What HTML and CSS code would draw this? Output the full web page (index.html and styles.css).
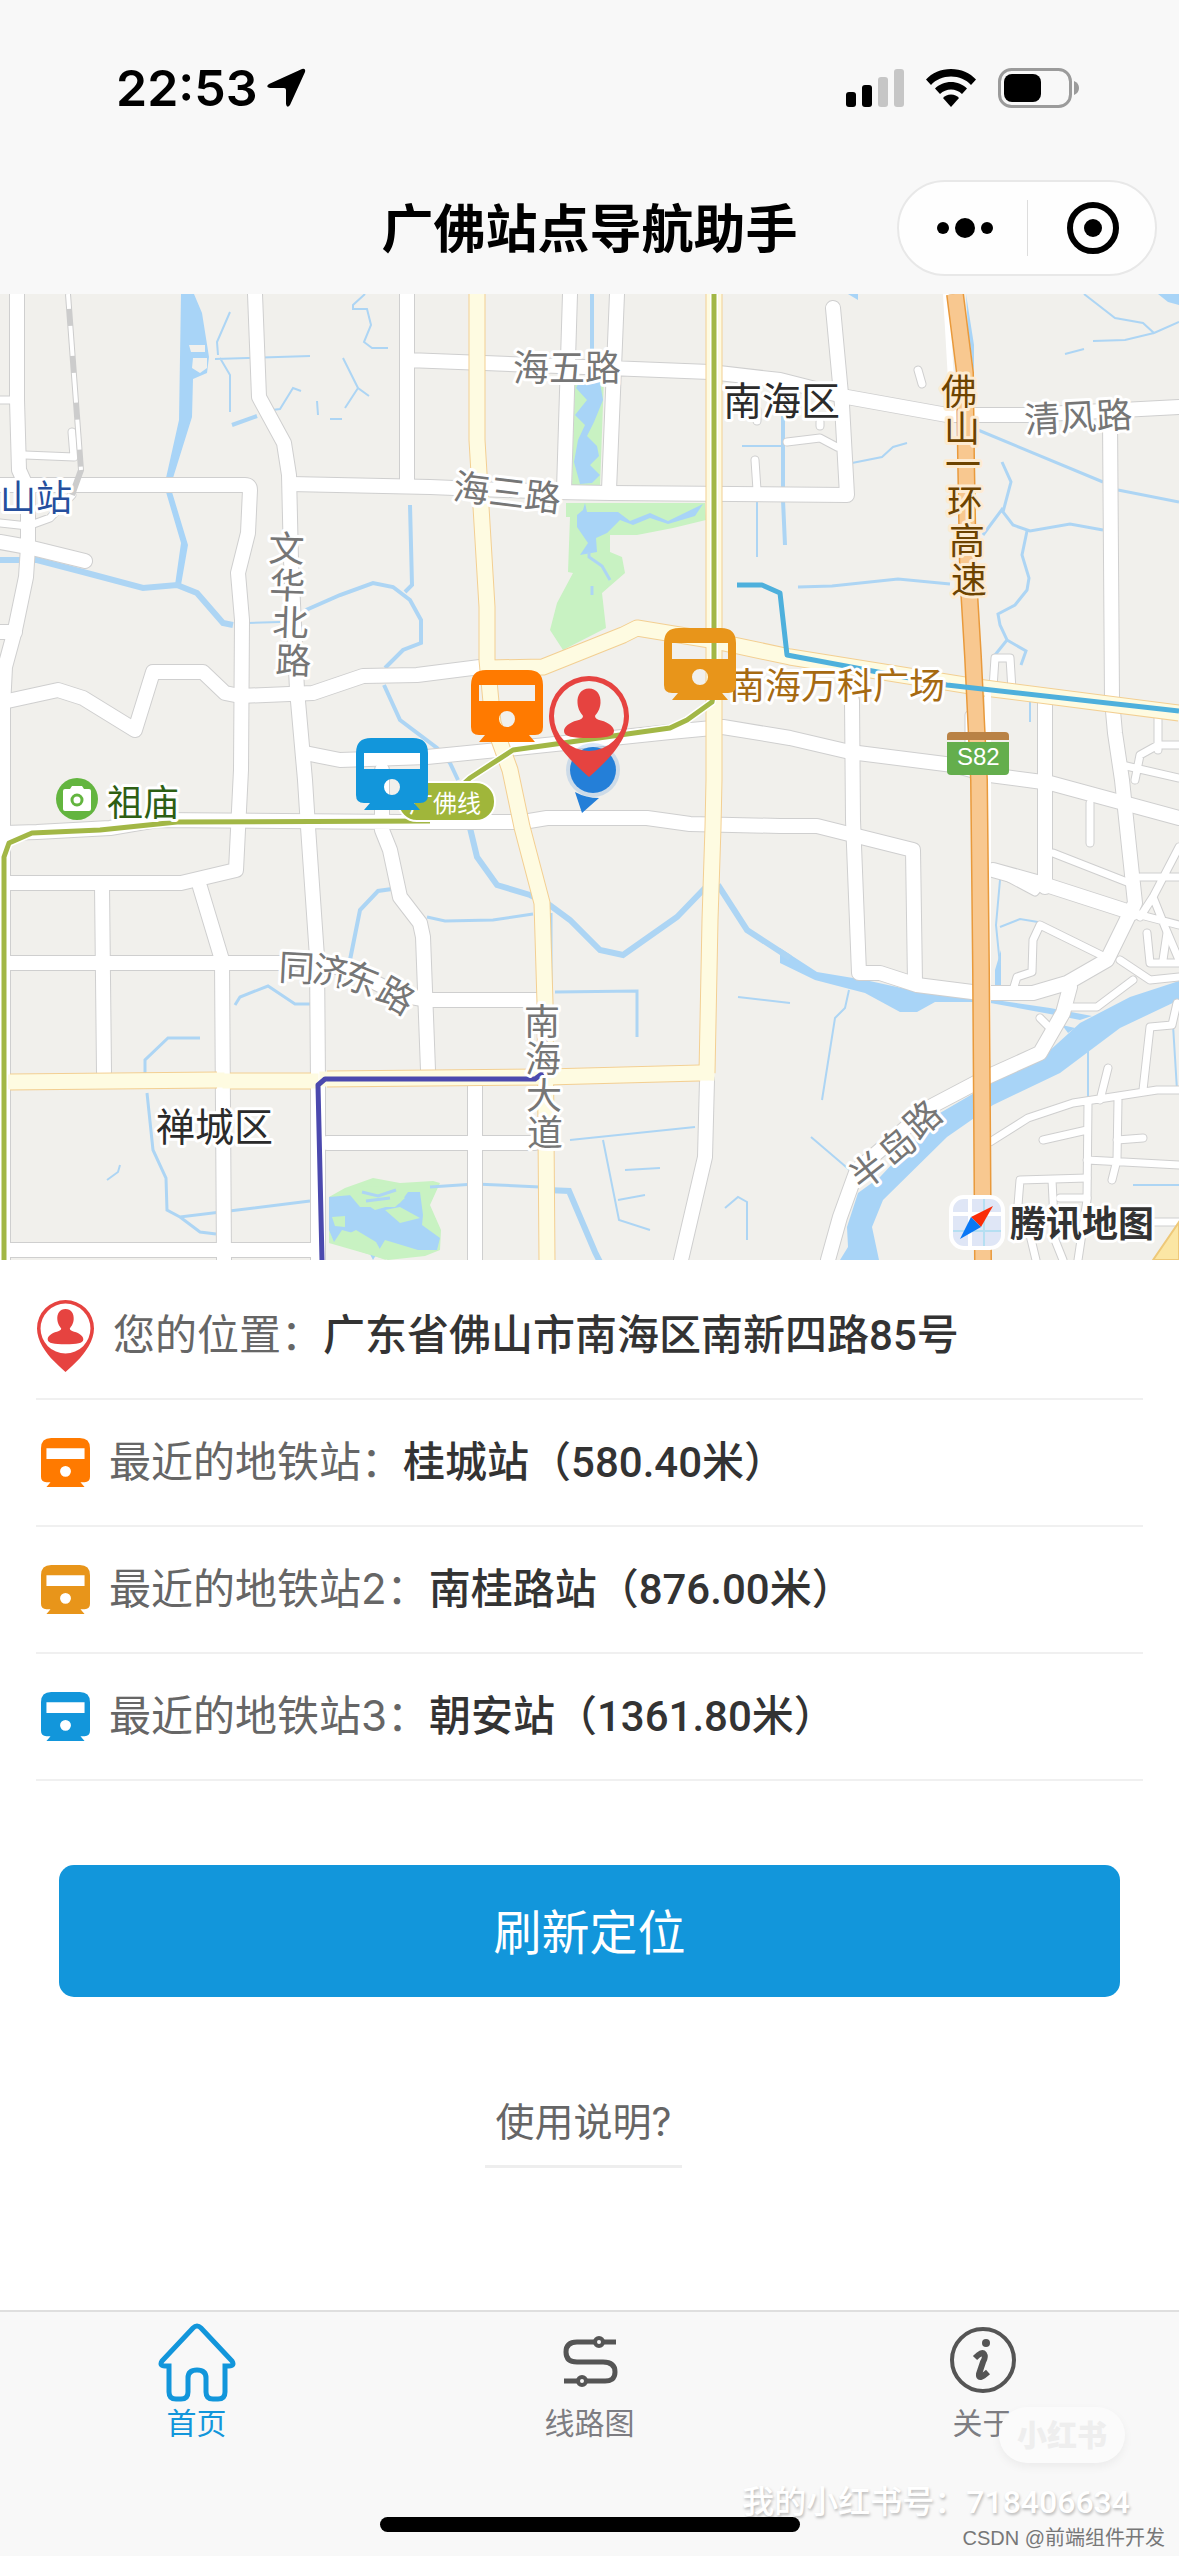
FILE: index.html
```html
<!DOCTYPE html>
<html lang="zh-CN">
<head>
<meta charset="utf-8">
<meta name="viewport" content="width=device-width, initial-scale=1">
<title>广佛站点导航助手</title>
<link rel="stylesheet" href="styles.css">
</head>
<body>
<svg class="sprite" aria-hidden="true">
  <symbol id="train" viewBox="0 0 72 72">
    <path fill="currentColor" fill-rule="evenodd" d="M15 0H57Q72 0 72 15V57Q72 65 64 65H58L64 72H8L14 65H8Q0 65 0 57V15Q0 0 15 0ZM8 15V31H64V15ZM36 41A8 8 0 1 0 36 57A8 8 0 1 0 36 41Z"/>
  </symbol>
  <symbol id="pin" viewBox="0 0 80 101">
    <path fill="currentColor" fill-rule="evenodd" d="M40 0A40 40 0 0 1 80 40C80 57 68 74 56 86Q46 96 40 101Q34 96 24 86C12 74 0 57 0 40A40 40 0 0 1 40 0ZM40 5A35 35 0 1 0 40 75A35 35 0 1 0 40 5Z"/>
    <path fill="currentColor" d="M40 12.500C48 12.500 52 19 51.500 27C51 34 48 37 46 40Q46 43 52 44.500C60 46.500 65 51 65 55C65 61 56 62 40 62C24 62 15 61 15 55C15 51 20 46.500 28 44.500Q34 43 34 40C32 37 29 34 28.500 27C28 19 32 12.500 40 12.500Z"/>
  </symbol>
</svg>

<header class="top">
  <div class="status">
    <div class="status-left">
      <span class="clock">22:53</span>
      <svg class="locate" viewBox="0 0 40 40"><path d="M36 1Q40 0 39 4L24 37Q21 41 20 36V22Q20 20 18 20H4Q-1 19 3 16Z"/></svg>
    </div>
    <div class="status-right">
      <svg class="signal" viewBox="0 0 58 38"><rect x="0" y="23" width="10" height="15" rx="3"/><rect x="16" y="16" width="10" height="22" rx="3"/><g fill="#c6c6c6"><rect x="32" y="8" width="10" height="30" rx="3"/><rect x="48" y="0" width="10" height="38" rx="3"/></g></svg>
      <svg class="wifi" viewBox="0 0 50 38"><path d="M25 0C35 0 44 4 50 10.500L45 16C40 10.500 33 7.500 25 7.500S10 10.500 5 16L0 10.500C6 4 15 0 25 0Z"/><path d="M25 13C31 13 37 15.500 41 19.500L36 25C33 22 29 20.500 25 20.500S17 22 14 25L9 19.500C13 15.500 19 13 25 13Z"/><path d="M25 25.500C28.500 25.500 31 27 33 29L25 38L17 29C19 27 21.500 25.500 25 25.500Z"/></svg>
      <svg class="battery" viewBox="0 0 82 40"><rect x="1.500" y="1.500" width="71" height="37" rx="12" fill="none" stroke="#9b9b9b" stroke-width="3"/><rect x="6" y="6" width="37" height="28" rx="8"/><path d="M76 13Q81 15 81 20T76 27Z" fill="#9b9b9b"/></svg>
    </div>
  </div>
  <div class="nav">
    <h1>广佛站点导航助手</h1>
    <div class="capsule">
      <button type="button" aria-label="更多"><svg viewBox="0 0 60 60"><circle cx="10" cy="30" r="6"/><circle cx="32" cy="30" r="10"/><circle cx="54" cy="30" r="6"/></svg></button>
      <button type="button" aria-label="关闭"><svg viewBox="0 0 60 60"><circle cx="32" cy="30" r="23" fill="none" stroke="#000" stroke-width="6"/><circle cx="32" cy="30" r="9"/></svg></button>
    </div>
  </div>
</header>

<main>
<svg class="map" viewBox="0 294 1179 966" role="img" aria-label="地图">
  <defs>
    <g id="streets">
      <path d="M17 294V400L19 470L28 490V547L26 577L15 630L5 667L3 707V1260"/>
      <path d="M0 485H245Q250 485 250 490L248 533L238 573L242 620L241 770L236 870L181 883H0"/>
      <path d="M255 294L259 397L284 443L289 475L291 560L297 690L305 780L308 827L317 957L318 1083V1260"/>
      <path d="M290 484L430 487L557 492L610 493L847 495L842 405L833 308"/>
      <path d="M0 542L28 547L85 561"/>
      <path d="M0 632H15M3 702L58 690L83 698L135 730L153 672H203L225 693L240 696L313 693L363 676L417 675L480 667"/>
      <path d="M305 753L340 760L427 757L517 748L670 732L723 727L790 738L850 752L953 765L990 775L1050 783L1179 818"/>
      <path d="M407 294V483M407 360L710 372L780 380L847 397L947 415H1027L1179 407M570 294L564 490M617 294L609 490"/>
      <path d="M1110 418L1112 700L1115 733L1122 780L1128 837L1135 903L1107 960L1067 983L1033 993H980L917 985L880 973H859L853 820L852 700"/>
      <path d="M1045 703V887M5 833L37 832L110 828L157 820L400 822H523L547 818H647L690 824L780 826H817L913 850L915 983M382 770V830L390 850L400 897L420 923L423 937L428 1070"/>
      <path d="M102 885L104 1072M5 963H317M200 887L222 960L224 1260M0 1250H318M317 963L350 970L400 995L428 1000H540M475 1085V1260M327 1143H535"/>
      <path d="M707 1080L705 1157L681 1260M1070 987L1063 1013L1040 1053L987 1077L930 1107L857 1170L840 1217L828 1260M993 870L1040 883L1133 913"/>
    </g>
    <g id="lanes">
      <path d="M0 400H12M25 455L74 457L72 432M0 523L28 526L50 518L72 495M787 442L820 438L837 447M755 460L757 490M918 370L922 384M757 410V421M820 422V426"/>
      <path d="M993 688L995 658H1010L1012 690M969 715V745M1053 853L1127 882M1090 803V843M1179 847L1153 897L1140 917M1140 877H1179M1153 897L1165 927L1179 960M1133 913L1179 925"/>
      <path d="M1105 957L1040 925L1033 940L1032 972L1017 977L1013 990M1120 960L1150 980L1179 977M1133 980L1097 1007L1067 1007M1147 933L1150 963H1179M1167 933L1163 960M1040 1018L1050 1028"/>
      <path d="M990 1142L1028 1118L1073 1103L1157 1090H1179M1108 1068L1100 1100M1088 1103L1087 1200L1078 1260M1118 1100L1117 1160L1112 1180M1043 1140L1087 1130M1117 1140L1143 1138M1087 1160L1179 1165M1143 1090L1150 1027L1172 1025L1177 1003"/>
      <path d="M1018 1205L1020 1180L1087 1178M1052 1180L1055 1240L1063 1260M1060 1198H1087M1030 1235L1036 1260M1120 1222H1179M1135 780L1140 755L1158 745H1179M1158 718V750M1122 765L1179 778M1005 876L1035 892L1040 886"/>
    </g>
    <g id="avenues">
      <path d="M477 294V440L487 607V660L493 723L510 770L522 827L542 903L545 1003L547 1260"/>
      <path d="M714 294V780L713 827L710 920L707 1073"/>
      <path d="M490 668L543 667L623 635L637 628L710 640L790 657L977 687L1179 713"/>
      <path d="M10 1082L217 1080M230 1081H311M327 1079L547 1077L700 1073"/>
    </g>
    <path id="highway" d="M955 294L965 373L966 457L968 573L973 657L979 780L981 970L983 1260"/>
    <g id="subway"><path d="M4 1260V857L9 843L32 833L100 830L177 822L430 821M460 787L470 778L513 750L670 728L687 720L712 702L714 690V294"/></g>
  </defs>
  <rect y="294" width="1179" height="966" fill="#f1f0ec"/>

  <g class="park">
    <path d="M575 377H604L600 487H572ZM566 503H705L706 520L673 528L637 535H610V552L622 557L625 573L602 593L606 628L563 650L550 630L557 603L573 573L568 572L570 517H566Z"/>
    <path d="M329 1197L345 1188L373 1178L400 1183L433 1181L440 1183L430 1205L441 1230L440 1250L425 1256L388 1260L329 1243Z"/>
  </g>
  <g class="water">
    <path d="M181 294H194L202 313L209 357L207 373L193 379L192 417L173 478L172 492L188 545L181 585H175L181 543L166 492V478L179 420Z"/>
    <path d="M582 377H599L603 400L594 422L587 436L597 446L599 456L590 465L600 475L592 483L580 484L574 462L578 440L585 425L575 415L587 400L576 388ZM585 503L587 512H618L630 521L650 513L668 521L703 504L695 516L668 524L650 518L633 525L620 520L607 533L596 538L597 552L580 555L588 543L577 527V515L583 510Z"/>
    <path d="M329 1197L352 1195L375 1210L400 1203L408 1192H420L423 1215L422 1225L440 1238L437 1250L418 1250L385 1240L373 1260L360 1235L342 1230L334 1242L329 1230Z"/>
    <path d="M1179 981L1130 997L1080 1023L1047 1053L988 1085L940 1113L880 1177L858 1193L847 1227L848 1247L840 1260H879L872 1227L883 1200L947 1137L993 1105L1060 1073L1120 1028L1179 1000Z"/>
    <path d="M780 948L817 972L865 980L920 992L975 997L1050 1008L1092 1016L1080 1020L1050 1014L985 1002H935L917 1012H900L865 993L815 980L780 963ZM1158 294H1179V305L1168 302ZM966 294L974 345V373L968 330ZM848 294H858V300ZM995 970L1001 950V986H995ZM1062 1025L1075 1028L1068 1033Z"/>
  </g>
  <path d="M189 345H205V352H191ZM193 358H207V368L200 373L192 368Z" fill="#f1f0ec"/>
  <g class="park"><path d="M350 1195L362 1187L390 1186L405 1198L395 1207L360 1207ZM385 1210L400 1207L420 1218L400 1223ZM332 1217L345 1216V1227L335 1226ZM344 1236L356 1230L376 1242L386 1260L344 1246Z"/></g>
  <path class="streams" stroke-width="3" d="M362 1192L378 1196L396 1190M366 1201L390 1198M589 552V557L602 566L610 580M592 586V595"/>
  <g class="streams">
    <path stroke-width="6" d="M0 560H37L83 572L143 588L177 585L197 593L223 623L233 625"/>
    <path stroke-width="6" d="M470 828L477 857L497 885L530 895L547 903L570 920L600 950L623 955L677 917L705 888M718 885L747 930L790 958M547 1190L569 1191L595 1252L600 1262"/>
    <path stroke-width="4" d="M306 610L340 595L373 583L393 587L410 600L421 620V643L403 650L385 668M384 685L400 720L437 748L450 763L458 780M410 505L412 585L405 592M592 294V355M783 410V500L785 545M232 425L257 416M350 960L360 910L378 891L392 889"/>
    <path stroke-width="3" d="M427 917L445 921L493 920L533 914M551 913V985M555 992L637 991V1037M145 1073L145 1060L168 1038H200M147 1093L153 1150L166 1178L167 1210L180 1217L310 1201M180 1217L200 1232L216 1234M235 1005L240 997L268 986L295 1004H310M430 1187L475 1184L540 1187"/>
    <path stroke-width="2" d="M248 623L280 622M215 359L310 356M218 355L217 342L230 312M220 358L230 375V412M272 410L280 409L293 388L301 391M365 294L353 305V309H367L371 325L364 342L372 348H388M343 358L358 388L369 396M358 388L345 408M317 401L318 415M330 419H342"/>
    <path stroke-width="3" d="M978 430L1103 482M1118 490L1179 502M1002 462L1011 482L1003 512L1013 525L1030 531L1070 524L1103 530M1003 508L983 535M1027 531L1022 555L1029 578L1027 590L1015 605L998 614L1000 625L1007 640L1026 651L1021 665M1007 640L995 655M798 587L832 586L898 579L950 584"/>
    <path stroke-width="2" d="M1084 294L1115 318L1143 323L1154 333L1179 322M1154 333L1125 340L1093 341M1084 349L1065 354M852 463L882 457L893 447L907 443M742 446H783M757 500V557M849 990L845 1008L835 1018L822 1100M811 1137L852 1172M603 1140L619 1220L650 1230M570 1140L695 1127M625 1170L660 1168M618 1200L645 1195M725 1208L738 1197L747 1202V1240M738 997L790 1003M1000 880L996 925L1000 965M1000 927L1020 919L1038 922M1088 1050V1100M1030 700V722M1173 1025L1177 1090M120 1165L118 1172L107 1180M1133 1185H1179"/>
  </g>

  <g class="lane-edge"><use href="#lanes"/></g>
  <g class="street-edge"><use href="#streets"/></g>
  <g class="lane-fill"><use href="#lanes"/></g>
  <g class="street-fill"><use href="#streets"/></g>
  <path d="M68 294L81 470L72 495" fill="none" stroke="#ccc" stroke-width="6"/>
  <path d="M68 294L81 470" fill="none" stroke="#fff" stroke-width="4" stroke-dasharray="30 17" stroke-dashoffset="15"/>
  <g class="avenue-edge"><use href="#avenues"/></g>
  <g class="avenue-fill"><use href="#avenues"/></g>
  <path d="M1153 1260L1179 1222V1260Z" fill="#fbe6a4" stroke="#eec878" stroke-width="2"/>
  <path d="M946 294L951 380M988 690V1060" fill="none" stroke="#fff" stroke-width="6"/>
  <use href="#highway" class="highway-edge"/>
  <use href="#highway" class="highway-fill"/>
  <g class="subway-halo"><use href="#subway"/></g>
  <g class="subway"><use href="#subway"/></g>
  <path class="subway violet" d="M322 1260L318 1085L325 1079H535L543 1073"/>
  <path class="subway violet faint" d="M544 1073L546 1008"/>
  <path class="subway azure" d="M737 585H762L780 593L787 655L947 685L1179 711"/>

  <circle cx="77" cy="799" r="21" fill="#63b53f"/>
  <path d="M63 791Q63 789 65 789H70L72 786H82L84 789H89Q91 789 91 791V809Q91 811 89 811H65Q63 811 63 809Z" fill="#fff"/>
  <circle cx="77" cy="800" r="5" fill="none" stroke="#63b53f" stroke-width="3"/>
  <rect x="398" y="782" width="97" height="39" rx="19" fill="#a0b63a" stroke="#fff" stroke-width="2"/>
  <text class="line-name" x="409" y="812">广佛线</text>
  <path d="M951 732H1005Q1009 732 1009 736V740H947V736Q947 732 951 732Z" fill="#b98245"/>
  <path d="M947 742H1009V771Q1009 775 1005 775H951Q947 775 947 771Z" fill="#64ae4d"/>
  <text class="route-no" x="957" y="765">S82</text>

  <g class="label">
    <text x="513" y="381">海五路</text>
    <text x="452" y="499" transform="rotate(7 452 499)">海三路</text>
    <text x="268 269 272 275" y="561 598 635 673" rotate="2">文华北路</text>
    <text x="1025" y="433" transform="rotate(-3 1025 433)">清风路</text>
    <text x="278 311 339 374" y="980 981 984 998" rotate="3 10 22 30">同济东路</text>
    <text x="524 525 526 527" y="1035 1072 1109 1146">南海大道</text>
    <text x="862 892 918" y="1192 1168 1141" rotate="-38 -41 -42">半岛路</text>
    <text class="brown" x="941 944 945 947 949 951" y="405 442 478 516 554 593">佛山一环高速</text>
    <text class="ochre" x="729" y="699">南海万科广场</text>
    <text class="green" x="107" y="816">祖庙</text>
    <text class="blue" x="0" y="511">山站</text>
    <text class="district" x="723" y="415">南海区</text>
    <text class="district" x="156" y="1141">禅城区</text>
  </g>

  <circle cx="593" cy="770" r="27" fill="#2b7fd8" opacity=".18"/>
  <circle cx="593" cy="770" r="23" fill="#247fd8"/>
  <path d="M575 792Q586 798 599 798L582 813Z" fill="#247fd8"/>
  <use href="#train" class="azure-ink" x="356" y="738" width="72" height="72"/>
  <use href="#train" class="orange-ink" x="471" y="670" width="72" height="72"/>
  <use href="#train" class="amber-ink" x="664" y="628" width="72" height="72"/>
  <use href="#pin" class="red-ink" x="549" y="676" width="80" height="101"/>

  <rect x="951" y="1197" width="52" height="51" rx="13" fill="#dfe6f6" stroke="#fff" stroke-width="4"/>
  <path d="M970 1199V1246M953 1214H1001" stroke="#fff" stroke-width="4"/>
  <path d="M984 1199V1246M953 1231H1001" stroke="#b5dff2" stroke-width="2"/>
  <path d="M993 1206L971 1217L981 1227Z" fill="#fa2c08"/>
  <path d="M960 1239L971 1217L981 1227Z" fill="#0a78f5"/>
  <text class="brand" x="1010" y="1237">腾讯地图</text>
</svg>

<ul class="places">
  <li><svg class="icon-pin red-ink" aria-hidden="true"><use href="#pin"/></svg><p>您的位置：<strong>广东省佛山市南海区南新四路85号</strong></p></li>
  <li><svg class="icon-train orange-ink" aria-hidden="true"><use href="#train"/></svg><p>最近的地铁站：<strong>桂城站（580.40米）</strong></p></li>
  <li><svg class="icon-train amber-ink" aria-hidden="true"><use href="#train"/></svg><p>最近的地铁站2：<strong>南桂路站（876.00米）</strong></p></li>
  <li><svg class="icon-train azure-ink" aria-hidden="true"><use href="#train"/></svg><p>最近的地铁站3：<strong>朝安站（1361.80米）</strong></p></li>
</ul>
<div class="actions">
  <button type="button" class="refresh">刷新定位</button>
  <a class="help" href="#help">使用说明?</a>
</div>
</main>

<footer class="bottom">
  <nav class="tabs">
    <a class="active" href="#home"><svg viewBox="0 0 80 80"><path d="M40 4Q42 4 44 6L75 39Q78 44 72 44H68V70Q68 77 61 77H56Q49 77 49 70V56Q49 48 40 48T31 56V70Q31 77 24 77H19Q12 77 12 70V44H8Q2 44 5 39L36 6Q38 4 40 4Z" stroke-width="5"/></svg>首页</a>
    <a href="#routes"><svg viewBox="0 0 80 80"><g stroke-width="5"><path d="M66 20H54M44 20H27Q16 20 16 30T27 40H53Q65 40 65 50T53 59H37M27 59H14"/><circle cx="49" cy="20" r="4" stroke-width="4"/><circle cx="32" cy="59" r="4" stroke-width="4"/></g></svg>线路图</a>
    <a href="#about"><svg viewBox="0 0 80 80"><circle cx="40" cy="38" r="31" stroke-width="4"/><circle cx="43" cy="21" r="4" fill="#555" stroke="none"/><path d="M32 36Q39 29 41 32T40 40L36 52Q35 59 45 50" stroke-width="6"/></svg>关于</a>
  </nav>
  <div class="home-bar"></div>
  <span class="mark-pill">小红书</span>
  <span class="mark-id">我的小红书号：718406634</span>
  <span class="mark-csdn">CSDN @前端组件开发</span>
</footer>
</body>
</html>
```
FILE: styles.css
```css
* { box-sizing: border-box; }
body {
  margin: 0;
  min-height: 100vh;
  display: flex;
  flex-direction: column;
  background: #fff;
  color: #333;
  font-family: Inter, "Noto Sans CJK SC", sans-serif;
}
h1, p, ul { margin: 0; padding: 0; }
button { border: 0; padding: 0; font-family: inherit; }
a { text-decoration: none; }
.sprite { position: absolute; width: 0; height: 0; }

.red-ink { color: #e64340; }
.orange-ink { color: #ff7a00; }
.amber-ink { color: #e8951a; }
.azure-ink { color: #1296db; }

/* status bar and title */
.top { background: #f8f8f8; padding-bottom: 18px; }
.status {
  display: flex;
  justify-content: space-between;
  align-items: center;
  height: 180px;
  padding: 0 99px 4px 116px;
}
.status-left { display: flex; align-items: center; gap: 8px; }
.status-right { display: flex; align-items: center; gap: 22px; }
.clock { font-size: 50px; font-weight: 600; color: #000; line-height: 60px; }
.locate { width: 40px; height: 40px; }
.signal { width: 58px; height: 38px; }
.wifi { width: 50px; height: 38px; }
.battery { width: 82px; height: 40px; }
.nav {
  display: grid;
  grid-template-columns: 1fr auto 1fr;
  align-items: center;
  padding: 0 22px;
}
.nav h1 { grid-column: 2; padding-top: 4px; font-size: 52px; font-weight: 600; line-height: 60px; color: #000; }
.capsule {
  justify-self: end;
  display: flex;
  width: 260px;
  height: 96px;
  border: 2px solid #e8e8e8;
  border-radius: 48px;
  background: #fefefe;
}
.capsule button { flex: 1; display: grid; place-items: center; background: none; position: relative; }
.capsule button + button::before {
  content: "";
  position: absolute;
  left: 0;
  top: 18px;
  height: 56px;
  border-left: 1px solid #ddd;
}
.capsule svg { width: 60px; height: 60px; }

/* map */
.map { display: block; width: 100%; overflow: hidden; }
.park { fill: #c8f2c2; }
.water { fill: #a8d4f7; }
.streams { fill: none; stroke: #add5f4; }
.street-edge, .street-fill, .lane-edge, .lane-fill,
.avenue-edge, .avenue-fill, .highway-edge, .highway-fill,
.subway, .subway-halo { fill: none; stroke-linejoin: round; }
.street-edge, .street-fill, .lane-edge, .lane-fill { stroke-linecap: round; }
.street-edge { stroke: #cfcfcf; stroke-width: 16px; }
.street-fill { stroke: #fff; stroke-width: 14px; }
.lane-edge { stroke: #cfcfcf; stroke-width: 9px; }
.lane-fill { stroke: #fff; stroke-width: 7px; }
.avenue-edge { stroke: #f3cf92; stroke-width: 17px; }
.avenue-fill { stroke: #fefbe1; stroke-width: 15px; stroke-linecap: square; }
.highway-edge { stroke: #e99a3c; stroke-width: 18px; }
.highway-fill { stroke: #f8c890; stroke-width: 15px; }
.subway-halo { stroke: #fff; stroke-width: 8px; }
.subway { stroke: #a2b746; stroke-width: 5px; }
.violet { stroke: #4b49ae; }
.faint { opacity: .4; }
.azure { stroke: #4eb0dc; }
.label { font-size: 36px; fill: #767676; stroke: #fff; stroke-width: 6px; stroke-linejoin: round; paint-order: stroke; }
.label .brown { fill: #6d4300; stroke: #fdebd2; }
.label .ochre { fill: #a66a12; }
.label .green { fill: #2d5f14; }
.label .blue { fill: #254f9e; }
.label .district { font-size: 39px; fill: #2b2b2b; }
.line-name { font-size: 24px; fill: #fff; }
.route-no { font-family: "Liberation Sans", sans-serif; font-size: 24px; fill: #fff; }
.brand { font-size: 36px; font-weight: 700; fill: #333; stroke: #fff; stroke-width: 6px; stroke-linejoin: round; paint-order: stroke; }

/* nearest stations */
.places { list-style: none; padding: 13px 36px 0; }
.places li {
  display: flex;
  align-items: center;
  gap: 19px;
  height: 127px;
  padding-left: 1px;
  border-bottom: 2px solid #f0f0f0;
}
.places p { font-size: 42px; line-height: 60px; color: #666; white-space: nowrap; }
.places strong { font-family: Roboto, "Noto Sans CJK SC", sans-serif; font-weight: 500; color: #333; }
.icon-pin { width: 57px; height: 72px; }
.icon-train { width: 49px; height: 49px; margin-left: 4px; }

.actions { display: flex; flex-direction: column; align-items: center; padding: 84px 59px 60px; }
.refresh {
  width: 100%;
  height: 132px;
  padding-bottom: 4px;
  border-radius: 15px;
  background: #1296db;
  color: #fff;
  font-size: 48px;
}
.help {
  margin: 92px 12px 0 0;
  padding: 0 11px 10px;
  border-bottom: 3px solid #eee;
  font-size: 39px;
  line-height: 66px;
  color: #666;
}

/* tab bar */
.bottom {
  position: relative;
  margin-top: auto;
  padding-bottom: 24px;
  background: #f8f8f8;
  border-top: 2px solid #dfdfdf;
}
.tabs { display: grid; grid-template-columns: repeat(3, 1fr); }
.tabs a {
  display: flex;
  flex-direction: column;
  align-items: center;
  padding-top: 10px;
  font-size: 30px;
  line-height: 42px;
  color: #7d7d82;
}
.tabs .active { color: #1296db; }
.tabs svg { width: 80px; height: 80px; fill: none; stroke: #555; }
.tabs .active svg { stroke: #1296db; }
.home-bar { width: 420px; height: 15px; margin: 73px auto 0; border-radius: 8px; background: #000; }
.mark-pill {
  position: absolute;
  right: 54px;
  top: 95px;
  width: 126px;
  border-radius: 28px;
  background: #fbfbfb;
  box-shadow: 0 4px 10px #0000000d;
  color: #eee;
  font-size: 30px;
  font-weight: 900;
  line-height: 56px;
  text-align: center;
}
.mark-id {
  position: absolute;
  right: 49px;
  bottom: 32px;
  color: #fff;
  font-family: Roboto, "Noto Sans CJK SC", sans-serif;
  font-size: 32px;
  font-weight: 500;
  line-height: 44px;
  text-shadow: 1px 2px 3px #00000040;
}
.mark-csdn {
  position: absolute;
  right: 14px;
  bottom: 4px;
  color: #777;
  font-family: "Liberation Sans", "Noto Sans CJK SC", sans-serif;
  font-size: 20px;
  line-height: 28px;
}
```
